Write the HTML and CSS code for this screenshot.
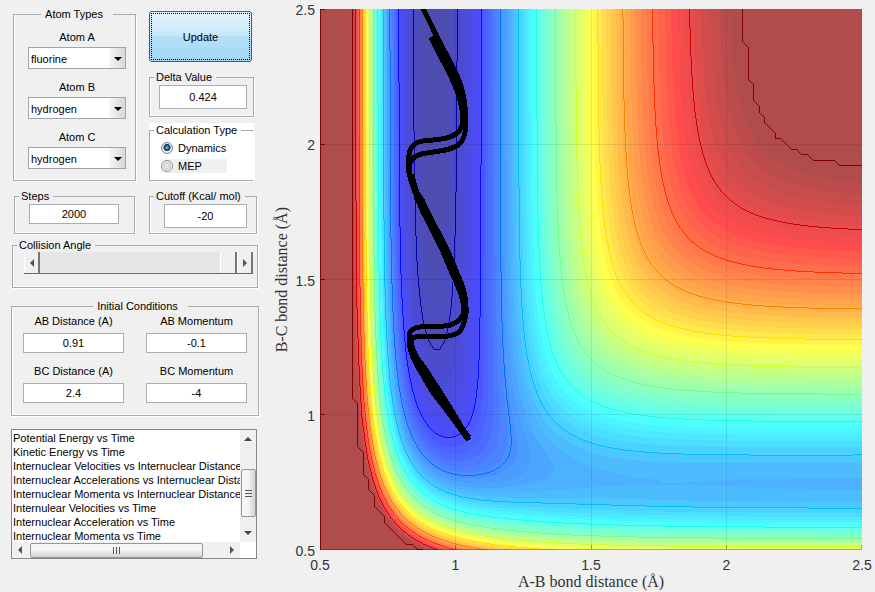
FILE: index.html
```html
<!DOCTYPE html>
<html lang="en">
<head>
<meta charset="utf-8">
<title>Triatomic Reaction Dynamics</title>
<link rel="stylesheet" href="styles.css">
</head>
<body>
<main class="app">
  <form class="controls">
    <div class="top-row">
      <fieldset class="panel atoms">
        <legend>Atom Types</legend>
        <div class="field">
          <label for="atom-a">Atom A</label>
          <span class="dropdown"><select id="atom-a"><option>fluorine</option></select></span>
        </div>
        <div class="field">
          <label for="atom-b">Atom B</label>
          <span class="dropdown"><select id="atom-b"><option>hydrogen</option></select></span>
        </div>
        <div class="field">
          <label for="atom-c">Atom C</label>
          <span class="dropdown"><select id="atom-c"><option>hydrogen</option></select></span>
        </div>
      </fieldset>
      <div class="side">
        <button type="button" class="update">Update</button>
        <fieldset class="panel delta">
          <legend id="l-delta">Delta Value</legend>
          <input type="text" class="box tall" value="0.424" aria-labelledby="l-delta">
        </fieldset>
        <div class="white">
          <fieldset class="panel calc">
            <legend>Calculation Type</legend>
            <label class="choice"><input type="radio" name="calc" checked>Dynamics</label>
            <label class="choice shaded"><input type="radio" name="calc">MEP</label>
          </fieldset>
        </div>
      </div>
    </div>

    <div class="steps-row">
      <fieldset class="panel steps">
        <legend id="l-steps">Steps</legend>
        <input type="text" class="box" value="2000" aria-labelledby="l-steps">
      </fieldset>
      <fieldset class="panel cutoff">
        <legend id="l-cutoff">Cutoff (Kcal/ mol)</legend>
        <input type="text" class="box tall" value="-20" aria-labelledby="l-cutoff">
      </fieldset>
    </div>

    <fieldset class="panel angle">
      <legend id="l-angle">Collision Angle</legend>
      <div class="slider">
        <button type="button" class="step" aria-label="Decrease"><i class="tri left"></i></button>
        <input type="range" min="0" max="180" value="180" aria-labelledby="l-angle">
        <button type="button" class="step" aria-label="Increase"><i class="tri right"></i></button>
      </div>
    </fieldset>

    <fieldset class="panel initial">
      <legend>Initial Conditions</legend>
      <div class="cell"><label for="ab-d">AB Distance (A)</label><input id="ab-d" type="text" class="box" value="0.91"></div>
      <div class="cell"><label for="ab-m">AB Momentum</label><input id="ab-m" type="text" class="box" value="-0.1"></div>
      <div class="cell"><label for="bc-d">BC Distance (A)</label><input id="bc-d" type="text" class="box" value="2.4"></div>
      <div class="cell"><label for="bc-m">BC Momentum</label><input id="bc-m" type="text" class="box" value="-4"></div>
    </fieldset>

    <div class="list">
      <select size="8" class="plots" aria-label="Plot type">
        <option>Potential Energy vs Time</option>
        <option>Kinetic Energy vs Time</option>
        <option>Internuclear Velocities vs Internuclear Distance</option>
        <option>Internuclear Accelerations vs Internuclear Distance</option>
        <option>Internuclear Momenta vs Internuclear Distance</option>
        <option>Internulear Velocities vs Time</option>
        <option>Internuclear Acceleration vs Time</option>
        <option>Internuclear Momenta vs Time</option>
      </select>
      <div class="bar vertical">
        <i class="tri up"></i>
        <span class="thumb"><i></i><i></i><i></i></span>
        <i class="tri down"></i>
      </div>
      <div class="bar horizontal">
        <i class="tri left"></i>
        <span class="thumb"><i></i><i></i><i></i></span>
        <i class="tri right"></i>
      </div>
    </div>
  </form>

  <figure class="chart">
    <div class="y-title"><span>B-C bond distance (Å)</span></div>
    <ol class="y-ticks"><li>2.5</li><li>2</li><li>1.5</li><li>1</li><li>0.5</li></ol>
    <div class="surface">
      <canvas id="field"></canvas>
      <svg class="overlay" viewBox="0 0 542 541" preserveAspectRatio="none" aria-hidden="true">
        <g class="grid" shape-rendering="crispEdges">
          <path d="M135.5 0V541M271.5 0V541M406.5 0V541M0 135.5H542M0 270.5H542M0 405.5H542"/>
        </g>
        <g class="ticks" shape-rendering="crispEdges">
          <path d="M0 135.5H5M0 270.5H5M0 405.5H5M135.5 536V541M271.5 536V541M406.5 536V541M541.5 536V541M0 540.5H542"/>
          <path class="axis" d="M0.5 0V541M0 .5H5M0 135.5H5M0 270.5H5M0 405.5H5"/>
        </g>
        <g class="trajectory" shape-rendering="crispEdges">
          <path d="M103 -1L115 24C124 42 132 55 138 69C143 81 146 97 146 114C146 124 143 132 138 136C132 141 120 142 107 144C98 145 92 148 90 154C88 168 93 178 102 191C114 218 128 238 136 262C143 276 147 290 146 304C145 313 143 319 139 323C132 328 121 328 107 328C97 328 93 327 91 330C91 341 97 350 104 358L117 378C128 395 140 415 149 431"/>
          <path d="M111 28L120 46C126 58 130 65 133 72C139 85 143 99 143 113C142 120 138 125 130 128C121 131 112 131 103 132C96 133 92 136 90 141C87 152 88 164 92 174C95 184 98 192 103 203C112 220 123 240 131 262C139 278 144 290 144 302C143 309 138 313 131 316C124 318 112 317 100 318C92 319 89 322 89 330C89 342 94 351 99 360L112 382C126 401 139 417 149 431"/>
          <path class="core" d="M115 30L135 70C141 83 144 98 144 110M91 165C93 178 97 187 102 197C111 217 124 238 134 262C140 276 144 287 145 298M91 338C94 349 99 357 105 366L128 401L148 429"/>
        </g>
      </svg>
    </div>
    <ol class="x-ticks"><li>0.5</li><li>1</li><li>1.5</li><li>2</li><li>2.5</li></ol>
    <figcaption class="x-title">A-B bond distance (Å)</figcaption>
  </figure>
</main>
<script src="surface.js"></script>
</body>
</html>
```
FILE: styles.css
```css
* { box-sizing: border-box; }

body {
  margin: 0;
  background: #f0f0f0;
  color: #000;
  font: 11px/14px "Liberation Sans", Arial, sans-serif;
}

input, select, button { font: inherit; color: inherit; margin: 0; border-radius: 0; }

.app {
  display: grid;
  grid-template-columns: 262px minmax(0, 1fr);
  align-items: start;
}

.controls { padding: 7px 3px 0 11px; }

.panel {
  --inset: 14px;
  min-width: 0;
  margin: 0;
  padding: 0 0 0 var(--inset);
  border: 1px solid #aaa;
  box-shadow: 1px 1px 0 #fff, inset 1px 0 0 #fff, inset 0 -1px 0 #fff;
}
.panel legend {
  margin-left: calc(4px - var(--inset));
  padding: 0 4px 0 2px;
  background: #f0f0f0;
  white-space: nowrap;
}

.top-row { display: grid; grid-template-columns: 123px 105px; gap: 13px; padding-left: 2px; }
.steps-row { display: grid; grid-template-columns: 121px 108px; gap: 14px; padding-left: 3px; margin-top: 8px; }

.atoms { text-align: center; padding-top: 9px; padding-right: 9px; padding-bottom: 11px; }
.panel.atoms legend { margin: 0 auto; padding: 0 10px 0 4px; }
.field { display: flex; flex-direction: column; gap: 3px; }
.field + .field { margin-top: 11px; }

.dropdown { position: relative; display: flex; }
.dropdown select {
  appearance: none;
  width: 100%;
  height: 22px;
  padding: 1px 18px 0 2px;
  border: 1px solid #a3a3ab;
  background: linear-gradient(90deg, #f6f6f6, #d8d8d8) right / 16px 100% no-repeat #fff;
}
.dropdown::after {
  content: "";
  position: absolute;
  right: 4px;
  top: 10px;
  border: 4px solid transparent;
  border-top-color: #000;
  border-bottom: 0;
  pointer-events: none;
}

.side { display: flex; flex-direction: column; padding-top: 4px; }
.update {
  height: 51px;
  margin-right: 2px;
  border: 1px solid #2c628b;
  border-radius: 3px;
  background: linear-gradient(#e5f4fc, #c8e8f9 48%, #b4e0f8 50%, #a3d8f5);
  outline: 1px dotted #000;
  outline-offset: -3px;
}
.delta { --inset: 9px; margin-top: 8px; padding-top: 1px; padding-right: 6px; padding-bottom: 7px; }
.white { margin-top: 6px; background: #fff; }
.calc { --inset: 11px; border-right-color: #fff; padding-top: 4px; padding-bottom: 7px; }
.calc legend { background: #fff; }
.choice { display: flex; align-items: center; gap: 5px; height: 14px; }
.choice + .choice { margin-top: 4px; }
.shaded { width: 66px; background: #f0f0f0; }
.choice input {
  appearance: none;
  width: 12px;
  height: 12px;
  border: 1px solid #8e8f8f;
  border-radius: 50%;
  background: radial-gradient(circle, #e8e8e8 20%, #c8c8c8 50%, #f4f4f4 60%);
}
.choice input:checked {
  border-color: #75808b;
  background: radial-gradient(circle at 50% 45%, #8fd4ee 0, #24668f 24%, #103a59 42%, #e8eef2 54%);
}

.box {
  display: block;
  width: 100%;
  height: 20px;
  padding: 0;
  border: 1px solid #abadb3;
  background: #fff;
  text-align: center;
}
.tall { height: 24px; }
.steps { padding-top: 1px; padding-right: 15px; }
.cutoff { padding-top: 1px; padding-right: 9px; padding-bottom: 5px; }

.angle { --inset: 11px; margin-top: 4px; margin-left: 1px; margin-right: 1px; padding-right: 4px; padding-bottom: 13px; }
.slider { display: flex; height: 22px; border-bottom: 1px solid #696969; }
.step {
  display: flex;
  align-items: center;
  justify-content: center;
  width: 16px;
  padding: 0;
  border: 0;
  border-left: 1px solid #fff;
  border-right: 2px solid #777;
  background: #f0f0f0;
}
.slider input {
  appearance: none;
  flex: 1;
  min-width: 0;
  background: #e5e5e5;
}
.slider input::-webkit-slider-thumb {
  appearance: none;
  width: 17px;
  height: 21px;
  border-left: 1px solid #fff;
  border-right: 2px solid #777;
  background: #f0f0f0;
}

.tri { width: 0; height: 0; border: 4px solid transparent; }
.tri.left { border-left: 0; border-right-color: #555; }
.tri.right { border-right: 0; border-left-color: #555; }
.tri.up { border-top: 0; border-bottom-color: #444; }
.tri.down { border-bottom: 0; border-top-color: #444; }

.initial {
  --inset: 11px;
  display: grid;
  grid-template-columns: 101px 101px;
  gap: 11px 22px;
  margin-top: 11px;
  padding-top: 1px;
  padding-bottom: 12px;
}
.panel.initial legend { margin: 0 auto; padding: 0 10px 0 4px; }
.cell { display: flex; flex-direction: column; gap: 5px; text-align: center; }

.list {
  display: grid;
  grid-template-columns: minmax(0, 1fr) 16px;
  grid-template-rows: 112px 16px;
  margin: 13px 2px 0 0;
  border: 1px solid #828790;
  background: #fff;
}
.plots {
  width: 100%;
  height: 112px;
  padding: 2px 0 0 1px;
  border: 0;
  background: #fff;
  overflow: hidden;
}
.plots option { min-height: 0; height: 14px; padding: 0; line-height: 14px; overflow: hidden; }
.bar { display: flex; align-items: center; background: #f0f0f0; }
.vertical { flex-direction: column; padding: 7px 0; }
.horizontal { padding: 0 6px; }
.thumb {
  display: flex;
  align-items: center;
  justify-content: center;
  gap: 2px;
  border: 1px solid #979797;
  border-radius: 2px;
}
.thumb i { background: #555; }
.vertical .thumb {
  flex-direction: column;
  width: 15px;
  height: 48px;
  margin: auto 0 14px;
  background: linear-gradient(90deg, #f6f6f6 45%, #d2d2d6);
}
.vertical .thumb i { width: 7px; height: 1px; }
.horizontal .thumb {
  width: 173px;
  height: 15px;
  margin: 0 auto 0 8px;
  background: linear-gradient(#f6f6f6 45%, #d2d2d6);
}
.horizontal .thumb i { width: 1px; height: 7px; }

.chart {
  display: grid;
  grid-template-columns: 40px 18px minmax(0, 1fr);
  grid-template-rows: auto 22px auto;
  margin: 0;
  padding: 9px 13px 0 0;
}
.y-title {
  display: flex;
  align-items: center;
  justify-content: center;
  font: 16px/20px "Liberation Serif", serif;
  color: #333;
}
.y-title span { writing-mode: vertical-rl; transform: rotate(180deg); }
.x-title {
  grid-column: 3;
  text-align: center;
  font: 16px/20px "Liberation Serif", serif;
  color: #333;
}
.y-ticks, .x-ticks {
  display: flex;
  justify-content: space-between;
  margin: 0;
  padding: 0;
  list-style: none;
  font-size: 14px;
  line-height: 16px;
  color: #333;
}
.y-ticks { flex-direction: column; align-items: flex-end; margin: -7px 5px -9px 0; }
.x-ticks { grid-column: 3; padding-top: 7px; }
.x-ticks li { display: flex; justify-content: center; width: 0; }

.surface { position: relative; aspect-ratio: 542 / 541; }
.surface canvas { display: block; width: 100%; height: 100%; }
.overlay { position: absolute; inset: 0; width: 100%; height: 100%; }
.grid path { fill: none; stroke: #000; stroke-opacity: .09; }
.ticks path { fill: none; stroke: #000; stroke-opacity: .3; }
.ticks .axis { stroke: #700; stroke-opacity: .9; }
.trajectory path { fill: none; stroke: #000; stroke-width: 5; }
.trajectory .core { stroke-width: 7; }
```
FILE: surface.js
```js
// Collinear LEPS surface for F + H2, energies in kcal/mol, distances in angstrom.
const SATO = 0.18;
const HF = { d: 141.2, b: 2.2187, r: 0.917 };
const HH = { d: 109.5, b: 1.942, r: 0.742 };
const CUTOFF = -22.4;
const N = 101;
const MIN_R = 0.5;
const STEP = 0.02;
const LEVEL_GAP = 10.4;
const COLOR_GAP = 1.886;

function terms(m, r) {
  const e = Math.exp(-m.b * (r - m.r));
  return {
    q: m.d / 4 * ((3 + SATO) * e * e - (2 + 6 * SATO) * e),
    j: m.d / 4 * ((1 + 3 * SATO) * e * e - (6 + 2 * SATO) * e)
  };
}

function energy(ab, bc) {
  const a = terms(HF, ab), b = terms(HH, bc), c = terms(HF, ab + bc);
  const root = Math.sqrt(((a.j - b.j) ** 2 + (b.j - c.j) ** 2 + (c.j - a.j) ** 2) / 2);
  return Math.min(CUTOFF, (a.q + b.q + c.q - root) / (1 + SATO));
}

function jet(i) {
  const clamp = v => Math.max(0, Math.min(1, v));
  const t = i + 1;
  return [clamp(Math.min((t - 24) / 16, (72 - t) / 16)),
          clamp(Math.min((t - 8) / 16, (56 - t) / 16)),
          clamp(Math.min((t + 8) / 16, (40 - t) / 16))].map(v => v * 255);
}

function draw() {
  const canvas = document.getElementById("field");
  const w = canvas.width = canvas.clientWidth;
  const h = canvas.height = canvas.clientHeight;
  const ctx = canvas.getContext("2d");
  const img = ctx.createImageData(w, h);

  const nodes = [];
  for (let row = 0; row < N; row++)
    for (let col = 0; col < N; col++)
      nodes.push(energy(MIN_R + STEP * col, MIN_R + STEP * (N - 1 - row)));

  const value = new Float64Array(w * h);
  for (let y = 0; y < h; y++) {
    const gy = y / (h - 1) * (N - 1), r = Math.min(N - 2, Math.floor(gy)), v = gy - r;
    for (let x = 0; x < w; x++) {
      const gx = x / (w - 1) * (N - 1), c = Math.min(N - 2, Math.floor(gx)), u = gx - c;
      const tl = nodes[r * N + c], tr = nodes[r * N + c + 1];
      const bl = nodes[(r + 1) * N + c], br = nodes[(r + 1) * N + c + 1];
      value[y * w + x] = u > v ? tl + u * (tr - tl) + v * (br - tr)
                               : tl + v * (bl - tl) + u * (br - bl);
    }
  }

  const index = v => Math.max(0, Math.min(62, 63 + Math.floor((v - CUTOFF) / COLOR_GAP)));
  const level = v => Math.floor((v - CUTOFF + 1e-6) / LEVEL_GAP);
  for (let y = 0; y < h; y++) {
    for (let x = 0; x < w; x++) {
      const p = y * w + x, l = level(value[p]);
      const edge = (x > 0 && level(value[p - 1]) < l) || (x < w - 1 && level(value[p + 1]) < l) ||
                   (y > 0 && level(value[p - w]) < l) || (y < h - 1 && level(value[p + w]) < l);
      const rgb = edge
        ? jet(Math.min(63, Math.floor(64 + l * 5.55)))
        : jet(index(value[p])).map(k => k * 0.7 + 76.5);
      img.data.set([rgb[0], rgb[1], rgb[2], 255], p * 4);
    }
  }
  ctx.putImageData(img, 0, 0);
}

draw();
window.addEventListener("resize", draw);
```
